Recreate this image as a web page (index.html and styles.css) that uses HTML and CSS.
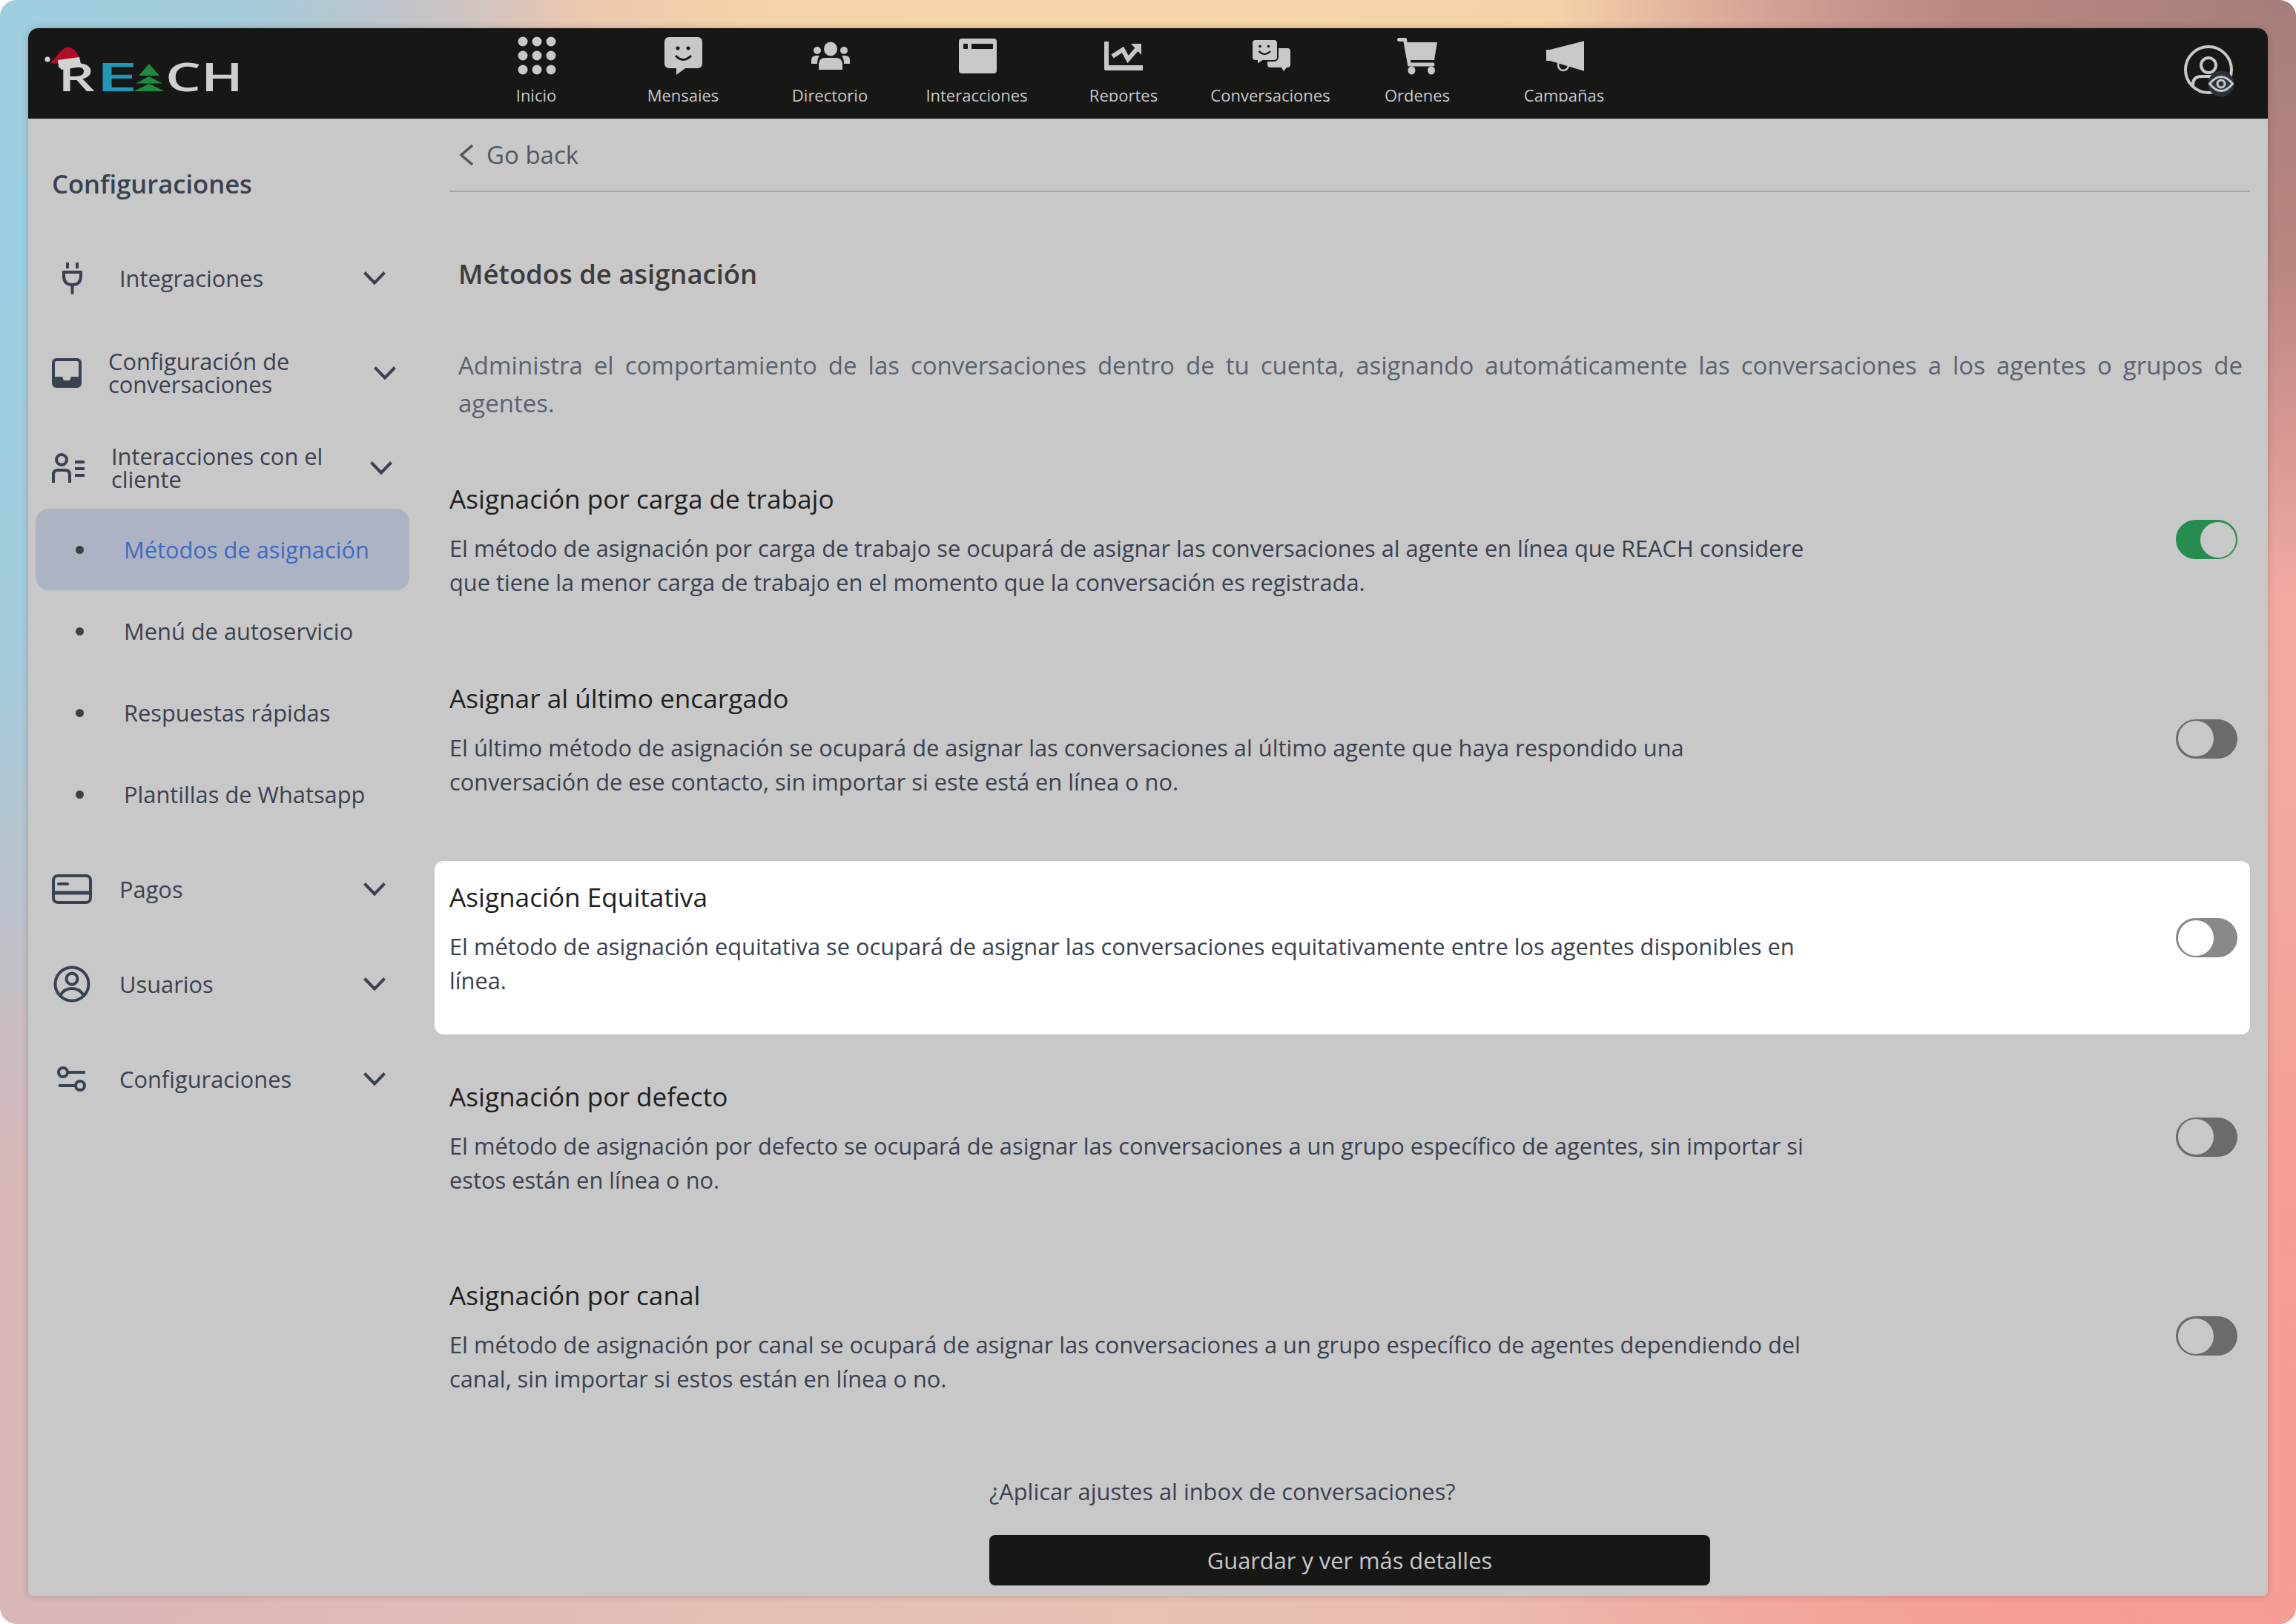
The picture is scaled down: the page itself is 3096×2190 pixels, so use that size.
FILE: index.html
```html
<!DOCTYPE html>
<html lang="es">
<head>
<meta charset="utf-8">
<title>Métodos de asignación</title>
<link rel="stylesheet" href="styles.css">
</head>
<body>
<div class="desk">
<div class="window">
  <header class="topbar">
    <div class="logo-slot">
      <svg class="logo" viewBox="0 0 272 66" width="272" height="66">
        <text class="logo-text" x="20" y="63" textLength="50" lengthAdjust="spacingAndGlyphs" fill="#d0d0d0">R</text>
        <text class="logo-text" x="71" y="63" textLength="57" lengthAdjust="spacingAndGlyphs" fill="#1f97b8">E</text>
        <text class="logo-text" x="165" y="63" textLength="105" lengthAdjust="spacingAndGlyphs" fill="#d0d0d0">CH</text>
        <path fill="#1f8a3d" d="M143 26 157 42H129ZM143 43 161 52.500H125ZM143 53 164 63H122Z"/>
        <path fill="#b20c28" d="M9 23C16 24 19 10 31 4 40 2 46 10 49 18L22 26C18 25 12 26 9 23Z"/>
        <circle cx="6" cy="20" r="3.500" fill="#d2d2d2"/>
        <path fill="#d2d2d2" d="M20 21 49 17 52 30 25 34 21 30Z"/>
      </svg>
    </div>
    <nav class="nav">
      <a class="nav-item">
        <svg class="nav-icon" viewBox="0 0 54 54"><g fill="#c8c8c8"><circle cx="9" cy="7" r="6.500"/><circle cx="28" cy="7" r="6.500"/><circle cx="47" cy="7" r="6.500"/><circle cx="9" cy="26" r="6.500"/><circle cx="28" cy="26" r="6.500"/><circle cx="47" cy="26" r="6.500"/><circle cx="9" cy="45" r="6.500"/><circle cx="28" cy="45" r="6.500"/><circle cx="47" cy="45" r="6.500"/></g></svg>
        <span class="nav-label">Inicio</span>
      </a>
      <a class="nav-item">
        <svg class="nav-icon" viewBox="0 0 54 54"><path fill="#c8c8c8" d="M8 1H47A6 6 0 0 1 53 7V37A6 6 0 0 1 47 43H30L18 52V43H8A6 6 0 0 1 2 37V7A6 6 0 0 1 8 1Z"/><circle cx="20" cy="16" r="2.500" fill="#171716"/><circle cx="34" cy="16" r="2.500" fill="#171716"/><path d="M17 26Q27 37 38 26" fill="none" stroke="#171716" stroke-width="3"/></svg>
        <span class="nav-label">Mensajes</span>
      </a>
      <a class="nav-item">
        <svg class="nav-icon" viewBox="0 0 54 54"><g fill="#c8c8c8"><ellipse cx="28" cy="17" rx="9" ry="9.500"/><circle cx="10" cy="19" r="5"/><circle cx="46" cy="19" r="5"/><path d="M12 45V38Q12 29 21 29H35Q44 29 44 38V45Z"/><path d="M2 37V32Q2 26 9 26H13Q10 30 10 37Z"/><path d="M54 37V32Q54 26 47 26H43Q46 30 46 37Z"/></g></svg>
        <span class="nav-label">Directorio</span>
      </a>
      <a class="nav-item">
        <svg class="nav-icon" viewBox="0 0 54 54"><rect x="3" y="3" width="51" height="47" rx="4" fill="#c8c8c8"/><rect x="9" y="10" width="6" height="7" rx="1" fill="#171716"/><rect x="20" y="10" width="29" height="7" rx="1" fill="#171716"/></svg>
        <span class="nav-label">Interacciones</span>
      </a>
      <a class="nav-item">
        <svg class="nav-icon" viewBox="0 0 54 54"><path fill="#c8c8c8" d="M1 7H7V39H53V46H3A2 2 0 0 1 1 44Z"/><path d="M12 27 26 18 33 31 46 16" fill="none" stroke="#c8c8c8" stroke-width="6"/><path fill="#c8c8c8" d="M37 10H51V25Z"/></svg>
        <span class="nav-label">Reportes</span>
      </a>
      <a class="nav-item">
        <svg class="nav-icon" viewBox="0 0 54 54"><path fill="#c8c8c8" d="M27 16H50A4 4 0 0 1 54 20V38A4 4 0 0 1 50 42H49L45 47 42 42H27A4 4 0 0 1 23 38V20A4 4 0 0 1 27 16Z"/><path fill="#c8c8c8" stroke="#171716" stroke-width="2" d="M7 4H32A5 5 0 0 1 37 9V28A5 5 0 0 1 32 33H17L9 38V33H7A5 5 0 0 1 2 28V9A5 5 0 0 1 7 4Z"/><circle cx="13" cy="13.500" r="1.800" fill="#171716"/><circle cx="24.500" cy="13.500" r="1.800" fill="#171716"/><path d="M11.500 20Q19 28 27 20" fill="none" stroke="#171716" stroke-width="2.200"/></svg>
        <span class="nav-label">Conversaciones</span>
      </a>
      <a class="nav-item">
        <svg class="nav-icon" viewBox="0 0 54 54"><path d="M2.500 4.500H10.500L16.500 38H48" fill="none" stroke="#c8c8c8" stroke-width="5" stroke-linecap="round"/><path fill="#c8c8c8" d="M12.500 8H54L50 32H17Z"/><ellipse cx="19.500" cy="46" rx="5" ry="5.500" fill="#c8c8c8"/><ellipse cx="46" cy="46" rx="5" ry="5.500" fill="#c8c8c8"/></svg>
        <span class="nav-label">Ordenes</span>
      </a>
      <a class="nav-item">
        <svg class="nav-icon" viewBox="0 0 54 54"><ellipse cx="26" cy="39" rx="7" ry="7" fill="none" stroke="#c8c8c8" stroke-width="2.500"/><path fill="#c8c8c8" d="M3 18H8L55 6V47L8 33H3Z"/></svg>
        <span class="nav-label">Campañas</span>
      </a>
    </nav>
    <svg class="user-icon" viewBox="0 0 80 80" width="80" height="80">
      <circle cx="35" cy="35" r="31" fill="none" stroke="#c8c8c8" stroke-width="4"/>
      <circle cx="35" cy="29" r="10" fill="none" stroke="#c8c8c8" stroke-width="4"/>
      <path d="M14 58V55Q14 44 26 44H42Q56 44 56 55V58" fill="none" stroke="#c8c8c8" stroke-width="4"/>
      <circle cx="52" cy="54" r="17.500" fill="#2c323a"/>
      <path d="M36.500 54Q52 35 67.500 54 52 73 36.500 54Z" fill="none" stroke="#c8c8c8" stroke-width="3"/>
      <circle cx="52" cy="54" r="5" fill="none" stroke="#c8c8c8" stroke-width="3"/>
    </svg>
  </header>

  <div class="body">
    <aside class="sidebar">
      <h2 class="side-title">Configuraciones</h2>

      <a class="item">
        <span class="slot"><svg width="27" height="43" viewBox="0 0 27 43" fill="none" stroke="#3a4150" stroke-width="4"><path d="M7 0V8M20 0V8" stroke-width="4"/><path d="M2 13H25V18Q25 30 13.500 30 2 30 2 18Z"/><path d="M13.500 30V41" stroke-linecap="round"/></svg></span>
        <span class="item-text">Integraciones</span>
        <svg class="chev" viewBox="0 0 30 18"><path d="M1.500 1.500 15 15.500 28.500 1.500"/></svg>
      </a>

      <a class="item item-conf">
        <span class="slot slot-40"><svg width="40" height="40" viewBox="0 0 40 40"><rect x="2" y="2" width="36" height="36" rx="4" fill="none" stroke="#3a4150" stroke-width="4"/><path fill="#3a4150" d="M2 25H14L16 30H24L26 25H38V34A4 4 0 0 1 34 38H6A4 4 0 0 1 2 34Z"/></svg></span>
        <span class="item-text">Configuración de conversaciones</span>
        <svg class="chev" viewBox="0 0 30 18"><path d="M1.500 1.500 15 15.500 28.500 1.500"/></svg>
      </a>

      <a class="item item-inter">
        <span class="slot slot-44"><svg width="44" height="40" viewBox="0 0 44 40" fill="none" stroke="#3a4150" stroke-width="4"><circle cx="13" cy="9" r="7"/><path d="M2 40V29Q2 23 8 23H18Q24 23 24 29V40"/><path d="M31 12H44M31 21H44M31 30H44"/></svg></span>
        <span class="item-text">Interacciones con el cliente</span>
        <svg class="chev" viewBox="0 0 30 18"><path d="M1.500 1.500 15 15.500 28.500 1.500"/></svg>
      </a>

      <ul class="sub">
        <li class="sub-item is-active"><span class="bullet"></span>Métodos de asignación</li>
        <li class="sub-item"><span class="bullet"></span>Menú de autoservicio</li>
        <li class="sub-item"><span class="bullet"></span>Respuestas rápidas</li>
        <li class="sub-item"><span class="bullet"></span>Plantillas de Whatsapp</li>
      </ul>

      <a class="item">
        <span class="slot"><svg width="54" height="40" viewBox="0 0 54 40" fill="none" stroke="#3a4150" stroke-width="4"><rect x="2" y="2" width="50" height="36" rx="6"/><path d="M2 25H52" stroke-width="5"/><path d="M9 13H21" stroke-linecap="round"/></svg></span>
        <span class="item-text">Pagos</span>
        <svg class="chev" viewBox="0 0 30 18"><path d="M1.500 1.500 15 15.500 28.500 1.500"/></svg>
      </a>

      <a class="item">
        <span class="slot"><svg width="50" height="50" viewBox="0 0 50 50" fill="none" stroke="#3a4150" stroke-width="4"><circle cx="25" cy="25" r="22.500"/><circle cx="25" cy="18" r="7.500"/><path d="M9 41Q14 31 25 31 36 31 41 41"/></svg></span>
        <span class="item-text">Usuarios</span>
        <svg class="chev" viewBox="0 0 30 18"><path d="M1.500 1.500 15 15.500 28.500 1.500"/></svg>
      </a>

      <a class="item">
        <span class="slot"><svg width="40" height="36" viewBox="0 0 40 36" fill="none" stroke="#3a4150" stroke-width="4"><circle cx="8" cy="9" r="6"/><path d="M14 9H38"/><circle cx="31" cy="27" r="6"/><path d="M2 27H25"/></svg></span>
        <span class="item-text">Configuraciones</span>
        <svg class="chev" viewBox="0 0 30 18"><path d="M1.500 1.500 15 15.500 28.500 1.500"/></svg>
      </a>
    </aside>

    <main class="main">
      <div class="back">
        <svg class="back-chev" viewBox="0 0 20 30"><path d="M18 2 3 15 18 28"/></svg>
        <span>Go back</span>
      </div>
      <h1 class="heading">Métodos de asignación</h1>
      <p class="intro">Administra el comportamiento de las conversaciones dentro de tu cuenta, asignando automáticamente las conversaciones a los agentes o grupos de agentes.</p>

      <section class="rows">
        <div class="row">
          <div class="row-copy">
            <h3 class="row-title">Asignación por carga de trabajo</h3>
            <p class="row-desc">El método de asignación por carga de trabajo se ocupará de asignar las conversaciones al agente en línea que REACH considere que tiene la menor carga de trabajo en el momento que la conversación es registrada.</p>
          </div>
          <span class="toggle is-on"><span class="knob"></span></span>
        </div>
        <div class="row">
          <div class="row-copy">
            <h3 class="row-title">Asignar al último encargado</h3>
            <p class="row-desc">El último método de asignación se ocupará de asignar las conversaciones al último agente que haya respondido una conversación de ese contacto, sin importar si este está en línea o no.</p>
          </div>
          <span class="toggle"><span class="knob"></span></span>
        </div>
        <div class="row row-focus">
          <div class="row-copy">
            <h3 class="row-title">Asignación Equitativa</h3>
            <p class="row-desc">El método de asignación equitativa se ocupará de asignar las conversaciones equitativamente entre los agentes disponibles en línea.</p>
          </div>
          <span class="toggle"><span class="knob"></span></span>
        </div>
        <div class="row">
          <div class="row-copy">
            <h3 class="row-title">Asignación por defecto</h3>
            <p class="row-desc">El método de asignación por defecto se ocupará de asignar las conversaciones a un grupo específico de agentes, sin importar si estos están en línea o no.</p>
          </div>
          <span class="toggle"><span class="knob"></span></span>
        </div>
        <div class="row">
          <div class="row-copy">
            <h3 class="row-title">Asignación por canal</h3>
            <p class="row-desc">El método de asignación por canal se ocupará de asignar las conversaciones a un grupo específico de agentes dependiendo del canal, sin importar si estos están en línea o no.</p>
          </div>
          <span class="toggle"><span class="knob"></span></span>
        </div>
      </section>

      <div class="apply">
        <p class="apply-q">¿Aplicar ajustes al inbox de conversaciones?</p>
        <button class="apply-btn">Guardar y ver más detalles</button>
      </div>
    </main>
  </div>
</div>
</div>
</body>
</html>
```
FILE: styles.css
```css
* { box-sizing: border-box; }
html, body { margin: 0; padding: 0; background: #fff; }
body { width: 3096px; height: 2190px; overflow: hidden; font-family: "Open Sans", "Liberation Sans", sans-serif; }

.desk {
  width: 3096px;
  height: 2190px;
  padding: 38px;
  border-radius: 22px;
  overflow: hidden;
  background:
    radial-gradient(800px 1300px at 0% 14%, rgba(155,208,226,1) 0%, rgba(155,208,226,.85) 45%, rgba(155,208,226,0) 100%),
    radial-gradient(1000px 800px at 100% 0%, rgba(166,126,122,1) 0%, rgba(176,128,124,.85) 45%, rgba(180,130,125,0) 100%),
    radial-gradient(1000px 500px at 50% 0%, #f7d4a8 0%, rgba(247,212,168,.9) 55%, rgba(247,212,168,0) 100%),
    radial-gradient(1100px 900px at 100% 90%, #f79d96 0%, rgba(245,158,150,.9) 50%, rgba(245,158,150,0) 100%),
    linear-gradient(90deg, #d9b7b8 0%, #e8c2b3 50%, #f2a9a2 100%);
}

.window {
  width: 3020px;
  height: 2114px;
  background: #c8c8c8;
  border-radius: 14px 14px 6px 6px;
  overflow: hidden;
  display: flex;
  flex-direction: column;
  box-shadow: 0 0 8px rgba(60, 40, 40, .25);
}

/* top bar */
.topbar {
  height: 122px;
  flex: none;
  background: #171716;
  display: flex;
  align-items: flex-start;
}
.logo-slot { width: 586px; flex: none; padding: 22px 0 0 20px; }
.logo { display: block; }
.logo-text { font-family: "Open Sans", sans-serif; font-size: 52px; font-weight: 600; }

.nav { display: flex; flex: none; }
.nav-item {
  width: 198px;
  height: 99px;
  overflow: hidden;
  padding-top: 11px;
  display: flex;
  flex-direction: column;
  align-items: center;
}
.nav-icon { width: 54px; height: 54px; display: block; flex: none; }
.nav-label { margin-top: 9px; font-size: 22px; line-height: 32px; color: #c8c8c8; white-space: nowrap; }

.user-icon { margin: 21px 35px 0 auto; flex: none; display: block; }

/* body */
.body { flex: 1; display: flex; min-height: 0; }

.sidebar { width: 548px; flex: none; padding-top: 62px; }
.side-title {
  margin: 0 0 46px 32px;
  height: 52px;
  font-size: 34.600px;
  line-height: 52px;
  font-weight: 600;
  color: #3a4150;
}

.item {
  height: 110px;
  margin-bottom: 18px;
  padding-left: 32px;
  display: flex;
  align-items: center;
  color: #3a4150;
}
.slot { width: 54px; flex: none; display: flex; justify-content: center; align-items: center; margin-right: 37px; }
.slot svg { display: block; }
.slot-40 { width: 40px; margin-right: 36px; }
.slot-44 { width: 44px; margin-right: 36px; }
.item-text { font-size: 30.800px; line-height: 31px; width: 300px; }
.chev { width: 30px; height: 18px; flex: none; margin-left: auto; margin-right: 66px; fill: none; stroke: #3a4150; stroke-width: 4; }
.item-conf .chev { margin-right: 52px; }
.item-inter .chev { margin-right: 57px; }
.item-conf .item-text { width: 320px; }
.item-inter .item-text { width: 320px; }
.item-inter { margin-bottom: 0; }

.sub { list-style: none; margin: 0 0 18px; padding: 0; }
.sub-item {
  width: 504px;
  height: 110px;
  margin-left: 10px;
  display: flex;
  align-items: center;
  font-size: 30.800px;
  color: #3a4150;
  border-radius: 18px;
}
.bullet { width: 11px; height: 11px; border-radius: 50%; background: #404040; margin: 0 54px 0 54px; flex: none; }
.is-active { background: #adb3c3; color: #3b6bc4; }

/* main */
.main { flex: 1; min-width: 0; padding-right: 24px; display: flex; flex-direction: column; }
.back {
  height: 99px;
  margin-left: 20px;
  border-bottom: 2px solid #a5a5a5;
  display: flex;
  align-items: center;
  padding-left: 13px;
  padding-bottom: 0;
  font-size: 33px;
  color: #52575e;
}
.back-chev { width: 20px; height: 30px; margin-right: 17px; fill: none; stroke: #52575e; stroke-width: 3.500; }
.heading {
  margin: 85px 0 73px 32px;
  font-size: 36.400px;
  line-height: 50px;
  font-weight: 600;
  color: #3c3c3c;
}
.intro {
  margin: 0 10px 55px 32px;
  font-size: 33px;
  line-height: 51px;
  color: #5a6270;
  text-align: justify;
}

.rows { display: flex; flex-direction: column; gap: 34.500px; }
.row {
  height: 234px;
  padding: 25px 17px 0 20px;
  display: flex;
  justify-content: space-between;
  align-items: flex-start;
  border-radius: 12px;
}
.row-focus { background: #fff; }
.row-copy { width: 1840px; }
.row-title { margin: 0 0 21px; font-size: 35.200px; line-height: 46px; font-weight: 400; color: #1f1f1f; }
.row-desc { margin: 0; font-size: 30.800px; line-height: 46px; color: #3a4150; }

.toggle {
  width: 83px;
  height: 53px;
  margin-top: 52px;
  padding: 2.500px;
  border-radius: 27px;
  background: #6b6b6b;
  display: flex;
  flex: none;
}
.knob { width: 48px; height: 48px; border-radius: 50%; background: #c8c8c8; display: block; }
.is-on { background: #268c4f; justify-content: flex-end; }
.row-focus .toggle { background: #898989; }
.row-focus .knob { background: #fff; }

.apply { width: 972px; align-self: center; margin-top: 56px; margin-left: 20px; }
.apply-q { margin: 0 0 36px; font-size: 30.800px; line-height: 46px; color: #3a4150; }
.apply-btn {
  display: block;
  width: 100%;
  height: 68px;
  border: 0;
  border-radius: 8px;
  background: #171716;
  color: #c8c8c8;
  font-family: inherit;
  font-size: 30.800px;
}
```
